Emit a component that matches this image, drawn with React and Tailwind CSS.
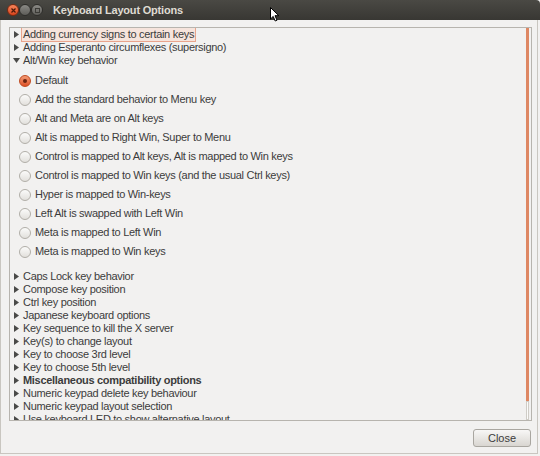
import React from "react"

const topRows = [
  { label: "Adding currency signs to certain keys", open: false, focus: true },
  { label: "Adding Esperanto circumflexes (supersigno)", open: false },
  { label: "Alt/Win key behavior", open: true },
]

const options = [
  "Default",
  "Add the standard behavior to Menu key",
  "Alt and Meta are on Alt keys",
  "Alt is mapped to Right Win, Super to Menu",
  "Control is mapped to Alt keys, Alt is mapped to Win keys",
  "Control is mapped to Win keys (and the usual Ctrl keys)",
  "Hyper is mapped to Win-keys",
  "Left Alt is swapped with Left Win",
  "Meta is mapped to Left Win",
  "Meta is mapped to Win keys",
]

const bottomRows = [
  "Caps Lock key behavior",
  "Compose key position",
  "Ctrl key position",
  "Japanese keyboard options",
  "Key sequence to kill the X server",
  "Key(s) to change layout",
  "Key to choose 3rd level",
  "Key to choose 5th level",
  "Miscellaneous compatibility options",
  "Numeric keypad delete key behaviour",
  "Numeric keypad layout selection",
  "Use keyboard LED to show alternative layout",
]

function Arrow({ open }) {
  return (
    <span className="w-[10px] flex items-center justify-center shrink-0">
      {open ? (
        <svg width="7" height="5" viewBox="0 0 7 5">
          <path d="M0 0 L7 0 L3.5 5 Z" fill="#4a4a48" />
        </svg>
      ) : (
        <svg width="5" height="7" viewBox="0 0 5 7">
          <path d="M0 0 L5 3.5 L0 7 Z" fill="#4a4a48" />
        </svg>
      )}
    </span>
  )
}

function TreeRow({ label, open, focus, bold }) {
  return (
    <div className="h-[13px] flex items-center pl-[1px]">
      <Arrow open={open} />
      <span
        className={
          "leading-[13px] px-[1px] border whitespace-nowrap " +
          (focus
            ? "border-[#e9a48c] bg-[#f6e4dc]"
            : "border-transparent") +
          (bold ? " font-bold" : "")
        }
      >
        {label}
      </span>
    </div>
  )
}

function Radio({ checked }) {
  return checked ? (
    <span className="w-[12px] h-[12px] rounded-full bg-gradient-to-b from-[#f29a74] to-[#dd4f22] border border-[#c04a20] flex items-center justify-center">
      <span className="w-[4px] h-[4px] rounded-full bg-[#6b2410]" />
    </span>
  ) : (
    <span className="w-[12px] h-[12px] rounded-full bg-gradient-to-b from-[#fbfbfa] to-[#e2e0dc] border border-[#b1aea8]" />
  )
}

export default function App() {
  return (
    <div
      className="relative w-[540px] h-[456px] bg-[#f2f1f0] text-[#3c3c3c] text-[11px] tracking-[-0.3px] flex flex-col overflow-hidden"
      style={{ fontFamily: '"Liberation Sans", Arial, sans-serif' }}
    >
      {/* title bar */}
      <div className="h-[20px] shrink-0 flex items-center bg-gradient-to-b from-[#4a4944] to-[#383733] rounded-tr-[4px]">
        <div className="flex items-center pl-[7px]">
          <span className="w-[12px] h-[12px] rounded-full bg-gradient-to-b from-[#f7855a] to-[#d9431a] border border-[#7a2a12] flex items-center justify-center">
            <svg width="5" height="5" viewBox="0 0 5 5">
              <path d="M0.5 0.5 L4.5 4.5 M4.5 0.5 L0.5 4.5" stroke="#4a1a0a" strokeWidth="1.2" />
            </svg>
          </span>
          <span className="w-[12px] h-[12px] rounded-full bg-gradient-to-b from-[#8b8a85] to-[#5e5d59] border border-[#2e2d2a]" />
          <span className="w-[12px] h-[12px] rounded-full bg-gradient-to-b from-[#8b8a85] to-[#5e5d59] border border-[#2e2d2a] flex items-center justify-center">
            <span className="w-[5px] h-[5px] border border-[#3c3b37]" />
          </span>
        </div>
        <span className="ml-[10px] font-bold text-[11px] text-[#dfdbd2] tracking-[-0.2px]">
          Keyboard Layout Options
        </span>
      </div>

      {/* list frame */}
      <div className="mt-[7px] ml-[9px] mr-[8px] h-[394px] shrink-0 border border-[#b7b4ae] flex">
        <div className="flex-1 overflow-hidden">
          {topRows.map((r) => (
            <TreeRow key={r.label} {...r} />
          ))}
          <div className="pt-[4px] pb-[9px]">
            {options.map((o, i) => (
              <div key={o} className="h-[19px] flex items-center pl-[9px]">
                <Radio checked={i === 0} />
                <span className="ml-[4px]">{o}</span>
              </div>
            ))}
          </div>
          {bottomRows.map((r) => (
            <TreeRow
              key={r}
              label={r}
              bold={r === "Miscellaneous compatibility options"}
            />
          ))}
        </div>
        <div className="w-[5px] shrink-0 flex flex-col pr-[1px]">
          <div className="h-[373px] w-[3px] bg-[#de8763]" />
          <div className="flex-1 w-[3px] bg-[#fbfbfa] border border-[#cfccc6]" />
        </div>
      </div>

      {/* footer */}
      <div className="flex justify-end pr-[9px] pt-[8px]">
        <button className="w-[58px] h-[18px] rounded-[3px] border border-[#a9a6a0] bg-gradient-to-b from-[#f8f7f6] to-[#d9d6d1] text-[11px] tracking-normal text-[#3c3c3c] leading-none">
          Close
        </button>
      </div>

      {/* window edges */}
      <div className="absolute left-0 top-[20px] bottom-[2px] w-[1px] bg-[#c9c6c0]" />
      <div className="absolute right-[2px] top-[20px] bottom-[2px] w-[1px] bg-[#c9c6c0]" />
      <div className="absolute left-0 right-[2px] bottom-[2px] h-[1px] bg-[#c9c6c0]" />

      {/* mouse pointer */}
      <svg className="absolute left-[270px] top-[7px]" width="10" height="15" viewBox="0 0 10 15">
        <path d="M0.5 0.5 L0.5 12 L3.2 9.4 L5.2 14 L7 13.2 L5 8.7 L8.8 8.7 Z" fill="#ffffff" stroke="#000000" strokeWidth="1" />
      </svg>
    </div>
  )
}
